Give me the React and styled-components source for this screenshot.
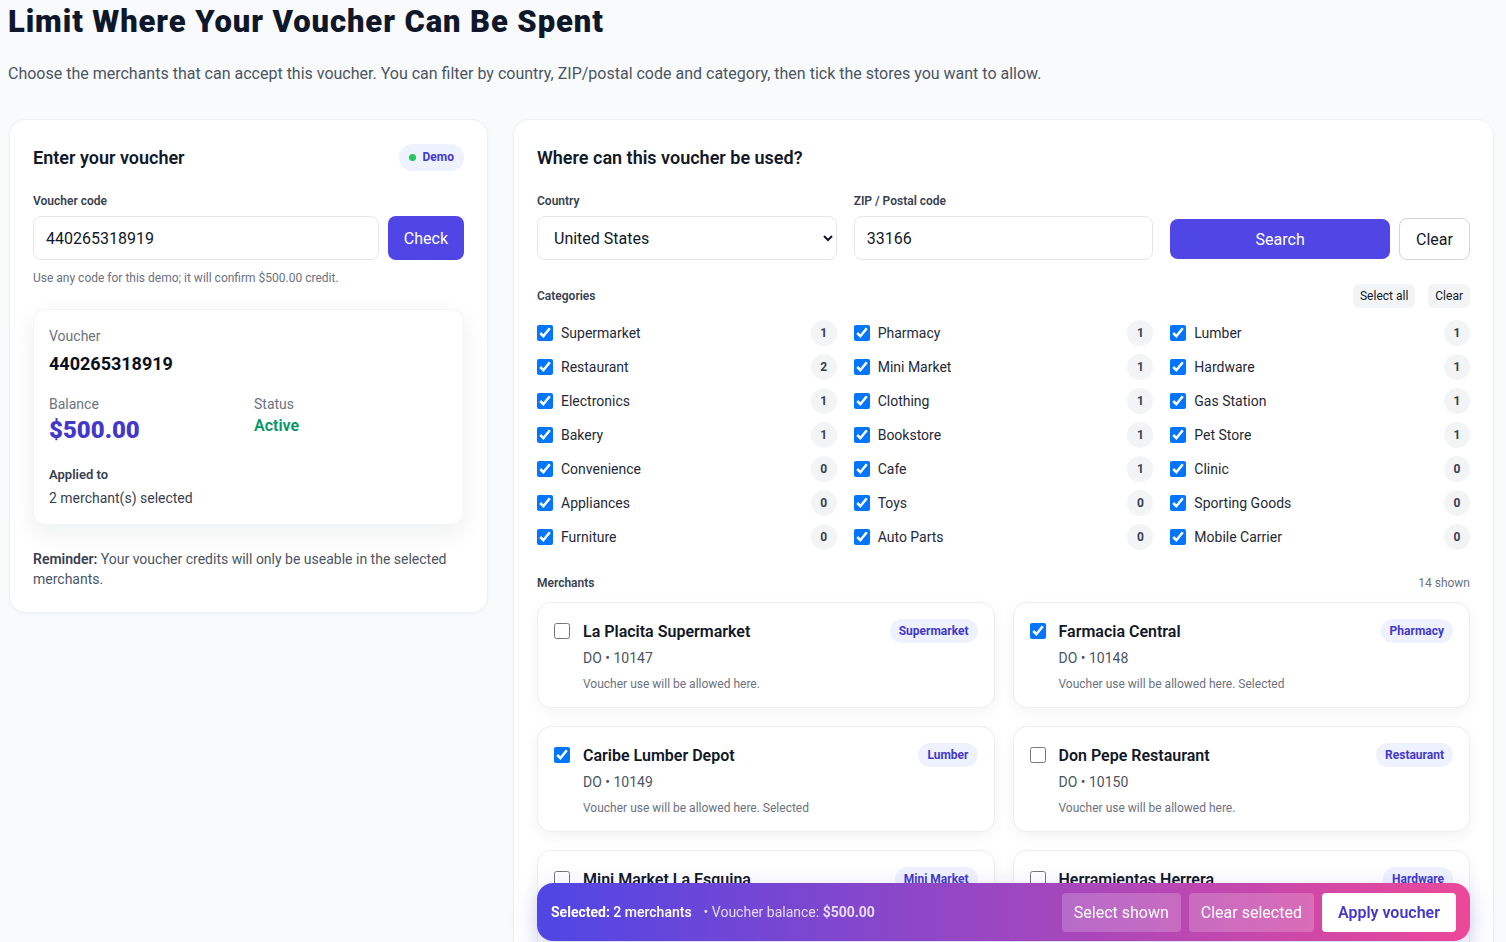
import React from 'react'
import styled, { createGlobalStyle } from 'styled-components'

const GlobalStyle = createGlobalStyle`
    body {
        margin: 0;
        background: #f8fafc;
        font-family: Roboto, "Liberation Sans", sans-serif;
        color: #111827;
    }
    * { box-sizing: border-box; }
`

// the page is its own scroll box so the action bar sticks to the window bottom
const Page = styled.div`
    height: 100vh;
    overflow: hidden;
    padding: 0 12px 0 8px;
`

const Title = styled.h1`
    margin: 4px 0 0;
    font-size: 31px;
    line-height: 36px;
    font-weight: 900;
    letter-spacing: 0.9px;
    color: #0f172a;
`

const Lead = styled.p`
    margin: 22px 0 0;
    font-size: 16px;
    line-height: 24px;
    color: #4b5563;
`

const Columns = styled.div`
    display: grid;
    grid-template-columns: 479px 981px;
    gap: 25px;
    margin-top: 33px;
    padding-left: 1px;
    align-items: start;
`

const Card = styled.section`
    background: #fff;
    border: 1px solid #eef0f4;
    border-radius: 16px;
    padding: 23px;
    box-shadow: 0 1px 3px rgba(15, 23, 42, 0.04);
`

const CardHeader = styled.div`
    display: flex;
    justify-content: space-between;
    align-items: center;
    height: 28px;
`

const CardTitle = styled.h2`
    margin: 0;
    font-size: 18px;
    font-weight: 600;
    color: #111827;
`

const DemoBadge = styled.span`
    display: inline-flex;
    align-items: center;
    gap: 7px;
    height: 27px;
    padding: 0 10px;
    border-radius: 999px;
    background: #eef2ff;
    color: #4338ca;
    font-size: 12px;
    font-weight: 700;

    &::before {
        content: '';
        width: 7px;
        height: 7px;
        border-radius: 50%;
        background: #22c55e;
    }
`

const FieldLabel = styled.label`
    display: block;
    font-size: 12px;
    line-height: 16px;
    font-weight: 600;
    color: #374151;
    margin: ${({ top }) => top || 0}px 0 7px;
`

const InputRow = styled.div`
    display: flex;
    gap: 9px;
`

const TextInput = styled.input`
    flex: 1;
    min-width: 0;
    width: ${({ full }) => (full ? '100%' : 'auto')};
    height: 44px;
    padding: 0 12px;
    border: 1px solid #e5e7eb;
    border-radius: 8px;
    font: inherit;
    font-size: 16px;
    color: #111827;
    background: #fff;
`

const Select = styled.select`
    width: 100%;
    height: 44px;
    padding: 0 8px 0 12px;
    border: 1px solid #e5e7eb;
    border-radius: 8px;
    font: inherit;
    font-size: 16px;
    color: #111827;
    background: #fff;
`

const PrimaryButton = styled.button`
    height: ${({ h }) => h || 44}px;
    padding: 0 16px;
    border: none;
    border-radius: 8px;
    background: #4f46e5;
    color: #fff;
    font: inherit;
    font-size: 16px;
    flex: ${({ grow }) => (grow ? 1 : 'none')};
`

const OutlineButton = styled.button`
    height: 42px;
    padding: 0 16px;
    border: 1px solid #d1d5db;
    border-radius: 8px;
    background: #fff;
    color: #111827;
    font: inherit;
    font-size: 16px;
`

const Hint = styled.div`
    margin-top: 10px;
    font-size: 12px;
    line-height: 16px;
    color: #6b7280;
`

const Summary = styled.div`
    margin-top: 23px;
    padding: 16px 15px;
    border-radius: 12px;
    background: #fff;
    border: 1px solid #f3f4f6;
    box-shadow: 0 8px 24px rgba(15, 23, 42, 0.07);
`

const Muted = styled.div`
    font-size: 14px;
    line-height: 20px;
    color: #6b7280;
`

const Code = styled.div`
    margin-top: 6px;
    font-size: 18px;
    line-height: 24px;
    font-weight: 700;
    color: #0b0f19;
`

const StatGrid = styled.div`
    display: grid;
    grid-template-columns: 205px 1fr;
    margin-top: 18px;
`

const Amount = styled.div`
    font-size: 24px;
    line-height: 32px;
    font-weight: 900;
    color: #4338ca;
`

const StatusText = styled.div`
    font-size: 16px;
    line-height: 24px;
    font-weight: 600;
    color: #059669;
`

const SubHead = styled.div`
    margin-top: 20px;
    font-size: 13px;
    line-height: 18px;
    font-weight: 600;
    color: #374151;
`

const Body = styled.div`
    margin-top: 4px;
    font-size: 14px;
    line-height: 20px;
    color: #374151;
`

const Reminder = styled.p`
    margin: 24px 0 0;
    font-size: 14px;
    line-height: 20px;
    color: #4b5563;

    b { font-weight: 600; color: #374151; }
`

const FilterGrid = styled.div`
    display: grid;
    grid-template-columns: 1fr 1fr 1fr;
    column-gap: 17px;
    align-items: end;
    margin-top: 22px;
`

const ButtonCell = styled.div`
    display: flex;
    align-items: center;
    gap: 9px;
    height: 44px;
    padding-top: 2px;
`

const SectionHead = styled.div`
    display: flex;
    justify-content: space-between;
    align-items: center;
    height: ${({ h }) => h || 24}px;
    margin-top: ${({ top }) => top}px;
`

const SectionLabel = styled.span`
    font-size: 12px;
    font-weight: 600;
    color: #374151;
`

const SmallNote = styled.span`
    font-size: 12px;
    color: #6b7280;
`

const MiniActions = styled.div`
    display: flex;
    gap: 13px;
`

const MiniButton = styled.button`
    height: 24px;
    padding: 0 7px;
    border: none;
    border-radius: 6px;
    background: #f3f4f6;
    color: #111827;
    font: inherit;
    font-size: 12px;
`

const CategoryGrid = styled.div`
    display: grid;
    grid-template-columns: repeat(3, 1fr);
    column-gap: 17px;
    row-gap: 8px;
    margin-top: 12px;
`

const CategoryItem = styled.label`
    display: flex;
    align-items: center;
    gap: 8px;
    height: 26px;
    font-size: 14px;
    color: #1f2937;
`

const Check = styled.input.attrs({ type: 'checkbox', readOnly: true })`
    width: 16px;
    height: 16px;
    margin: 0;
    flex: none;
`

const Count = styled.span`
    margin-left: auto;
    width: 26px;
    height: 26px;
    border-radius: 50%;
    background: #f3f4f6;
    display: flex;
    align-items: center;
    justify-content: center;
    font-size: 12px;
    font-weight: 700;
    color: #374151;
`

const MerchantGrid = styled.div`
    display: grid;
    grid-template-columns: 1fr 1fr;
    gap: 18px;
    margin-top: 11px;
`

const MerchantCard = styled.div`
    display: grid;
    grid-template-columns: 16px 1fr;
    column-gap: 13px;
    padding: 16px 16px 15px;
    border: 1px solid #eceef2;
    border-radius: 14px;
    background: #fff;
    box-shadow: 0 4px 14px rgba(15, 23, 42, 0.05);

    ${Check} { margin-top: 4px; }
`

const NameRow = styled.div`
    display: flex;
    justify-content: space-between;
    align-items: center;
    height: 24px;
`

const MerchantName = styled.span`
    font-size: 16px;
    font-weight: 600;
    color: #111827;
`

const Tag = styled.span`
    height: 24px;
    line-height: 24px;
    padding: 0 9px;
    border-radius: 999px;
    background: #eef2ff;
    color: #4338ca;
    font-size: 12px;
    font-weight: 700;
`

const Meta = styled.div`
    margin-top: 5px;
    font-size: 14px;
    line-height: 20px;
    color: #4b5563;
`

const Note = styled.div`
    margin-top: 8px;
    font-size: 12px;
    line-height: 16px;
    color: #6b7280;
`

const ActionBar = styled.div`
    position: sticky;
    bottom: 1px;
    z-index: 5;
    display: flex;
    align-items: center;
    height: 58px;
    margin-top: 18px;
    padding: 0 14px;
    border-radius: 16px;
    background: linear-gradient(90deg, #4f46e5 0%, #a347bd 55%, #ec4899 100%);
    color: #fff;
    font-size: 14px;
    box-shadow: 0 8px 24px rgba(79, 70, 229, 0.25);
`

const BarInfo = styled.span`
    font-weight: 500;
    b { font-weight: 700; }
`

const BarMeta = styled.span`
    margin-left: 12px;
    opacity: 0.8;
    b { font-weight: 700; }
`

const BarActions = styled.div`
    margin-left: auto;
    display: flex;
    gap: 8px;
`

const GhostButton = styled.button`
    height: 39px;
    padding: 0 12px;
    border: none;
    border-radius: 4px;
    background: rgba(255, 255, 255, 0.2);
    color: #fff;
    font: inherit;
    font-size: 16px;
`

const ApplyButton = styled(GhostButton)`
    background: #fff;
    color: #4338ca;
    font-weight: 600;
    padding: 0 16px;
`

const categories = [
    ['Supermarket', 1], ['Pharmacy', 1], ['Lumber', 1],
    ['Restaurant', 2], ['Mini Market', 1], ['Hardware', 1],
    ['Electronics', 1], ['Clothing', 1], ['Gas Station', 1],
    ['Bakery', 1], ['Bookstore', 1], ['Pet Store', 1],
    ['Convenience', 0], ['Cafe', 1], ['Clinic', 0],
    ['Appliances', 0], ['Toys', 0], ['Sporting Goods', 0],
    ['Furniture', 0], ['Auto Parts', 0], ['Mobile Carrier', 0],
]

const merchants = [
    { name: 'La Placita Supermarket', cat: 'Supermarket', zip: '10147' },
    { name: 'Farmacia Central', cat: 'Pharmacy', zip: '10148', on: true },
    { name: 'Caribe Lumber Depot', cat: 'Lumber', zip: '10149', on: true },
    { name: 'Don Pepe Restaurant', cat: 'Restaurant', zip: '10150' },
    { name: 'Mini Market La Esquina', cat: 'Mini Market', zip: '10151' },
    { name: 'Herramientas Herrera', cat: 'Hardware', zip: '10152' },
    { name: 'TecnoMundo', cat: 'Electronics', zip: '10153' },
    { name: 'Panadería El Trigal', cat: 'Bakery', zip: '10154' },
    { name: 'Boutique Marisol', cat: 'Clothing', zip: '10155' },
    { name: 'Librería Cuesta', cat: 'Bookstore', zip: '10156' },
    { name: 'Café Colonial', cat: 'Cafe', zip: '10157' },
    { name: 'Estación Shell Norte', cat: 'Gas Station', zip: '10158' },
    { name: 'Mundo Mascotas', cat: 'Pet Store', zip: '10159' },
    { name: 'El Conuco Restaurante', cat: 'Restaurant', zip: '10160' },
]

const App = () => {
    return (
        <>
            <GlobalStyle />
            <Page>
                <Title>Limit Where Your Voucher Can Be Spent</Title>
                <Lead>
                    Choose the merchants that can accept this voucher. You can filter by country, ZIP/postal code and category, then tick the stores you want to allow.
                </Lead>

                <Columns>
                    <Card>
                        <CardHeader>
                            <CardTitle>Enter your voucher</CardTitle>
                            <DemoBadge>Demo</DemoBadge>
                        </CardHeader>

                        <FieldLabel top={22}>Voucher code</FieldLabel>
                        <InputRow>
                            <TextInput defaultValue="440265318919" />
                            <PrimaryButton>Check</PrimaryButton>
                        </InputRow>
                        <Hint>Use any code for this demo; it will confirm $500.00 credit.</Hint>

                        <Summary>
                            <Muted>Voucher</Muted>
                            <Code>440265318919</Code>
                            <StatGrid>
                                <div>
                                    <Muted>Balance</Muted>
                                    <Amount>$500.00</Amount>
                                </div>
                                <div>
                                    <Muted>Status</Muted>
                                    <StatusText>Active</StatusText>
                                </div>
                            </StatGrid>
                            <SubHead>Applied to</SubHead>
                            <Body>2 merchant(s) selected</Body>
                        </Summary>

                        <Reminder>
                            <b>Reminder:</b> Your voucher credits will only be useable in the selected merchants.
                        </Reminder>
                    </Card>

                    <Card>
                        <CardHeader>
                            <CardTitle>Where can this voucher be used?</CardTitle>
                        </CardHeader>

                        <FilterGrid>
                            <div>
                                <FieldLabel>Country</FieldLabel>
                                <Select defaultValue="US">
                                    <option value="US">United States</option>
                                    <option value="DO">Dominican Republic</option>
                                </Select>
                            </div>
                            <div>
                                <FieldLabel>ZIP / Postal code</FieldLabel>
                                <TextInput full defaultValue="33166" />
                            </div>
                            <ButtonCell>
                                <PrimaryButton grow h={40}>Search</PrimaryButton>
                                <OutlineButton>Clear</OutlineButton>
                            </ButtonCell>
                        </FilterGrid>

                        <SectionHead top={24}>
                            <SectionLabel>Categories</SectionLabel>
                            <MiniActions>
                                <MiniButton>Select all</MiniButton>
                                <MiniButton>Clear</MiniButton>
                            </MiniActions>
                        </SectionHead>

                        <CategoryGrid>
                            {categories.map(([name, count]) => (
                                <CategoryItem key={name}>
                                    <Check checked />
                                    {name}
                                    <Count>{count}</Count>
                                </CategoryItem>
                            ))}
                        </CategoryGrid>

                        <SectionHead top={25} h={16}>
                            <SectionLabel>Merchants</SectionLabel>
                            <SmallNote>14 shown</SmallNote>
                        </SectionHead>

                        <MerchantGrid>
                            {merchants.map((m) => (
                                <MerchantCard key={m.zip}>
                                    <Check checked={!!m.on} />
                                    <div>
                                        <NameRow>
                                            <MerchantName>{m.name}</MerchantName>
                                            <Tag>{m.cat}</Tag>
                                        </NameRow>
                                        <Meta>DO • {m.zip}</Meta>
                                        <Note>Voucher use will be allowed here.{m.on ? ' Selected' : ''}</Note>
                                    </div>
                                </MerchantCard>
                            ))}
                        </MerchantGrid>

                        <ActionBar>
                            <BarInfo><b>Selected:</b> 2 merchants</BarInfo>
                            <BarMeta>• Voucher balance: <b>$500.00</b></BarMeta>
                            <BarActions>
                                <GhostButton>Select shown</GhostButton>
                                <GhostButton>Clear selected</GhostButton>
                                <ApplyButton>Apply voucher</ApplyButton>
                            </BarActions>
                        </ActionBar>
                    </Card>
                </Columns>
            </Page>
        </>
    )
}

export default App
